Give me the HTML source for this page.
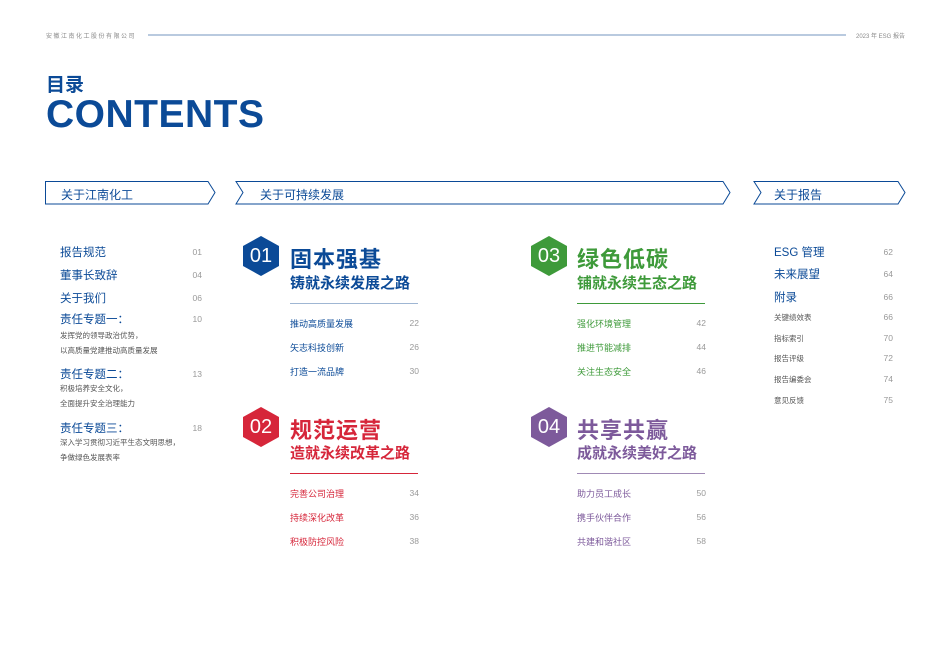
<!DOCTYPE html>
<html><head><meta charset="utf-8"><style>
*{margin:0;padding:0;box-sizing:border-box}
body{width:950px;height:645px;background:#fff;position:relative;overflow:hidden;font-family:"Liberation Sans","Noto Sans CJK SC",sans-serif}
.a{position:absolute;white-space:nowrap}
.hdr{font-size:6px;color:#8a8a8a;letter-spacing:1.5px}
.num{font-size:8.5px;color:#999;text-align:right;width:30px}
.lb{font-size:11.5px;color:#0b4a97}
.sm{font-size:7.5px;color:#555}
.it{font-size:9px}
.t1{font-size:22px;font-weight:bold;letter-spacing:1px}
.t2{font-size:15px;font-weight:bold}
.badge{width:36px;height:40px;clip-path:polygon(50% 0,100% 25%,100% 75%,50% 100%,0 75%,0 25%);color:#fff;font-size:20px;text-align:center;line-height:40px}
</style></head><body>
<div class="a hdr" style="left:46px;top:31px">安徽江南化工股份有限公司</div>
<div class="a" style="left:148px;top:34px;width:698px;height:1.5px;background:#b9cadf"></div>
<div class="a hdr" style="left:856px;top:31px;letter-spacing:0">2023 年 ESG 报告</div>
<div class="a" style="left:46px;top:70px;font-size:19px;font-weight:bold;color:#0b4a97">目录</div>
<div class="a" style="left:46px;top:93px;font-size:39px;font-weight:bold;color:#0b4a97;letter-spacing:0.5px">CONTENTS</div>

<svg class="a" style="left:0;top:0" width="950" height="645">
<g fill="none" stroke="#0b4a97" stroke-width="1">
<path d="M45.5 181.5H208L215 192.5L208 204H45.5Z"/>
<path d="M236 181.5H723L730 192.5L723 204H236L243 192.5Z"/>
<path d="M754 181.5H898L905 192.5L898 204H754L761 192.5Z"/>
</g>
<line x1="290" y1="303.5" x2="418" y2="303.5" stroke="#9fb6d3"/>
<line x1="290" y1="473.5" x2="418" y2="473.5" stroke="#d6263a"/>
<line x1="577" y1="303.5" x2="705" y2="303.5" stroke="#3e9a3a"/>
<line x1="577" y1="473.5" x2="705" y2="473.5" stroke="#a08ab5"/>
</svg>
<div class="a" style="left:61px;top:186px;font-size:12px;color:#0b4a97">关于江南化工</div>
<div class="a" style="left:260px;top:186px;font-size:12px;color:#0b4a97">关于可持续发展</div>
<div class="a" style="left:774px;top:186px;font-size:12px;color:#0b4a97">关于报告</div>

<div class="a lb" style="left:60px;top:244px">报告规范</div><div class="a num" style="left:172px;top:247px">01</div>
<div class="a lb" style="left:60px;top:267px">董事长致辞</div><div class="a num" style="left:172px;top:270px">04</div>
<div class="a lb" style="left:60px;top:290px">关于我们</div><div class="a num" style="left:172px;top:293px">06</div>
<div class="a lb" style="left:60px;top:311px">责任专题一：</div><div class="a num" style="left:172px;top:314px">10</div>
<div class="a sm" style="left:60px;top:330px">发挥党的领导政治优势，</div>
<div class="a sm" style="left:60px;top:345px">以高质量党建推动高质量发展</div>
<div class="a lb" style="left:60px;top:366px">责任专题二：</div><div class="a num" style="left:172px;top:369px">13</div>
<div class="a sm" style="left:60px;top:383px">积极培养安全文化，</div>
<div class="a sm" style="left:60px;top:398px">全面提升安全治理能力</div>
<div class="a lb" style="left:60px;top:420px">责任专题三：</div><div class="a num" style="left:172px;top:423px">18</div>
<div class="a sm" style="left:60px;top:437px">深入学习贯彻习近平生态文明思想，</div>
<div class="a sm" style="left:60px;top:452px">争做绿色发展表率</div>

<div class="a badge" style="left:243px;top:236px;background:#0b4a97">01</div>
<div class="a t1" style="left:290px;top:242px;color:#0b4a97">固本强基</div>
<div class="a t2" style="left:290px;top:272px;color:#0b4a97">铸就永续发展之路</div>
<div class="a it" style="left:290px;top:317px;color:#0b4a97">推动高质量发展</div><div class="a num" style="left:389px;top:318px">22</div>
<div class="a it" style="left:290px;top:341px;color:#0b4a97">矢志科技创新</div><div class="a num" style="left:389px;top:342px">26</div>
<div class="a it" style="left:290px;top:365px;color:#0b4a97">打造一流品牌</div><div class="a num" style="left:389px;top:366px">30</div>

<div class="a badge" style="left:243px;top:407px;background:#d6263a">02</div>
<div class="a t1" style="left:290px;top:413px;color:#d6263a">规范运营</div>
<div class="a t2" style="left:290px;top:442px;color:#d6263a">造就永续改革之路</div>
<div class="a it" style="left:290px;top:487px;color:#d6263a">完善公司治理</div><div class="a num" style="left:389px;top:488px">34</div>
<div class="a it" style="left:290px;top:511px;color:#d6263a">持续深化改革</div><div class="a num" style="left:389px;top:512px">36</div>
<div class="a it" style="left:290px;top:535px;color:#d6263a">积极防控风险</div><div class="a num" style="left:389px;top:536px">38</div>

<div class="a badge" style="left:531px;top:236px;background:#3e9a3a">03</div>
<div class="a t1" style="left:577px;top:242px;color:#3e9a3a">绿色低碳</div>
<div class="a t2" style="left:577px;top:272px;color:#3e9a3a">铺就永续生态之路</div>
<div class="a it" style="left:577px;top:317px;color:#3e9a3a">强化环境管理</div><div class="a num" style="left:676px;top:318px">42</div>
<div class="a it" style="left:577px;top:341px;color:#3e9a3a">推进节能减排</div><div class="a num" style="left:676px;top:342px">44</div>
<div class="a it" style="left:577px;top:365px;color:#3e9a3a">关注生态安全</div><div class="a num" style="left:676px;top:366px">46</div>

<div class="a badge" style="left:531px;top:407px;background:#7d5a9b">04</div>
<div class="a t1" style="left:577px;top:413px;color:#7d5a9b">共享共赢</div>
<div class="a t2" style="left:577px;top:442px;color:#7d5a9b">成就永续美好之路</div>
<div class="a it" style="left:577px;top:487px;color:#7d5a9b">助力员工成长</div><div class="a num" style="left:676px;top:488px">50</div>
<div class="a it" style="left:577px;top:511px;color:#7d5a9b">携手伙伴合作</div><div class="a num" style="left:676px;top:512px">56</div>
<div class="a it" style="left:577px;top:535px;color:#7d5a9b">共建和谐社区</div><div class="a num" style="left:676px;top:536px">58</div>

<div class="a lb" style="left:774px;top:244px">ESG 管理</div><div class="a num" style="left:863px;top:247px">62</div>
<div class="a lb" style="left:774px;top:266px">未来展望</div><div class="a num" style="left:863px;top:269px">64</div>
<div class="a lb" style="left:774px;top:289px">附录</div><div class="a num" style="left:863px;top:292px">66</div>
<div class="a sm" style="left:774px;top:312px">关键绩效表</div><div class="a num" style="left:863px;top:312px">66</div>
<div class="a sm" style="left:774px;top:333px">指标索引</div><div class="a num" style="left:863px;top:333px">70</div>
<div class="a sm" style="left:774px;top:353px">报告评级</div><div class="a num" style="left:863px;top:353px">72</div>
<div class="a sm" style="left:774px;top:374px">报告编委会</div><div class="a num" style="left:863px;top:374px">74</div>
<div class="a sm" style="left:774px;top:395px">意见反馈</div><div class="a num" style="left:863px;top:395px">75</div>
</body></html>
